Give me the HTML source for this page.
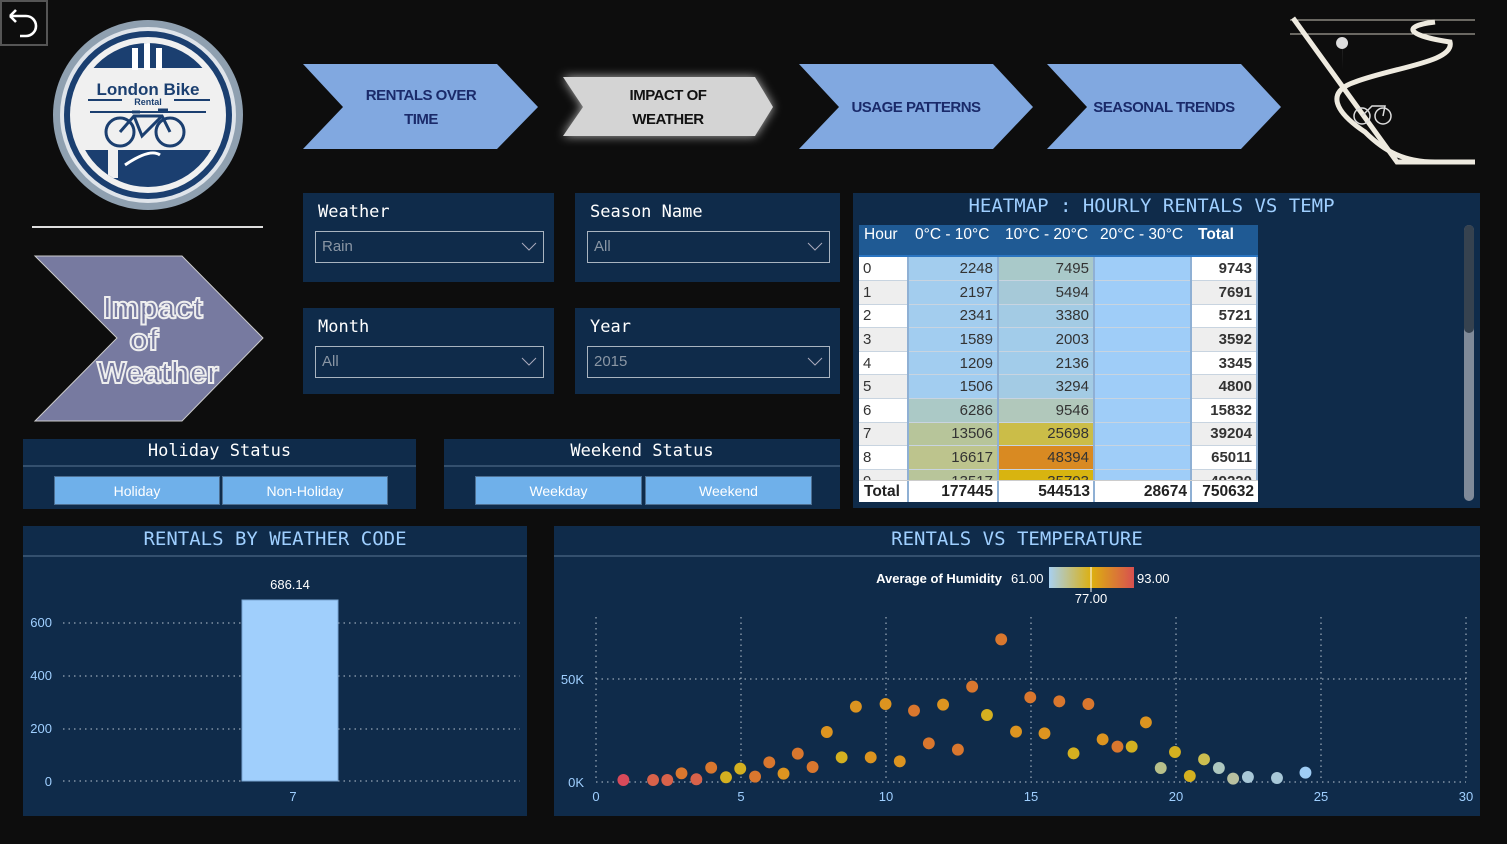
<!DOCTYPE html>
<html><head><meta charset="utf-8"><style>
*{margin:0;padding:0;box-sizing:border-box}
body{width:1507px;height:844px;background:#0d0d0d;position:relative;overflow:hidden;font-family:"Liberation Sans",sans-serif}
.abs{position:absolute}
.panel{position:absolute;background:#0f2b4a}
.mono{font-family:"DejaVu Sans Mono","Liberation Mono",monospace}
.slt{position:absolute;left:15px;top:9px;color:#fff;font-size:17px}
.dd{position:absolute;left:12px;top:38px;width:229px;height:32px;border:1px solid #a9b4c0;color:#8a96a4;font-size:15px;padding:6px 0 0 6px}
.dd svg{position:absolute;right:6px;top:10px}
.btn{position:absolute;top:37px;height:29px;background:#6fb0ea;color:#fff;font-size:14px;text-align:center;line-height:29px;border:1px solid #4d6f92}
table{border-collapse:collapse;font-size:15px;font-family:"Liberation Sans",sans-serif}
td{height:23.6px;padding:0 4px;border-right:2px solid #8fb0d4;border-bottom:1px solid #c8d4e0;color:#333}
</style></head><body>
<div class="abs" style="left:0;top:0;width:48px;height:46px;border:2px solid #555"></div>
<svg class="abs" style="left:4px;top:4px" width="40" height="40" viewBox="0 0 40 40"><path d="M6 12 L12 6 M6 12 L12 18 M6 12 H22 a10 10 0 0 1 0 20 H16" fill="none" stroke="#fff" stroke-width="2.6"/></svg>
<svg class="abs" style="left:50px;top:20px" width="196" height="190" viewBox="0 0 196 190">
<circle cx="98" cy="95" r="95" fill="#8fa0b0"/><circle cx="98" cy="95" r="88" fill="#dfe4ea"/>
<circle cx="98" cy="95" r="84" fill="#1b3f70"/><circle cx="98" cy="95" r="78" fill="#f0f0f0"/>
<clipPath id="c"><circle cx="98" cy="95" r="72"/></clipPath>
<g clip-path="url(#c)"><rect x="0" y="0" width="196" height="48" fill="#1b3f70"/><rect x="0" y="130" width="196" height="60" fill="#1b3f70"/>
<rect x="82" y="28" width="6" height="22" fill="#fff"/><rect x="94" y="22" width="6" height="28" fill="#fff"/><rect x="106" y="28" width="6" height="22" fill="#fff"/>
<rect x="58" y="128" width="10" height="30" fill="#f0f0f0"/><path d="M75 145 Q100 128 110 135" stroke="#fff" stroke-width="3" fill="none"/></g>
<text x="98" y="75" text-anchor="middle" font-family="Liberation Sans" font-weight="bold" font-size="17" fill="#1b3f70">London Bike</text>
<text x="98" y="85" text-anchor="middle" font-family="Liberation Sans" font-weight="bold" font-size="9" fill="#1b3f70">Rental</text>
<path d="M38 80 H72 M124 80 H160 M40 92 H156" stroke="#1b3f70" stroke-width="2"/>
<g fill="none" stroke="#1b3f70" stroke-width="3"><circle cx="70" cy="112" r="14"/><circle cx="120" cy="112" r="14"/><path d="M70 112 L84 96 H112 L120 112 M84 96 L92 116 L112 96 M82 92 H90 M108 90 H118"/></g>
</svg>
<div class="abs" style="left:32px;top:226px;width:231px;height:2px;background:#ddd"></div>
<svg class="abs" style="left:30px;top:252px" width="240" height="175"><polygon points="5,4 152,4 233,86 152,169 5,169 87,86" fill="#777aa0" stroke="#ccc" stroke-width="1"/>
<g font-family="Liberation Sans" font-weight="bold" font-size="31" fill="none" stroke="#eee" stroke-width="2" text-anchor="middle"><text x="123" y="66">Impact</text><text x="114" y="98">of</text><text x="128" y="131">Weather</text></g></svg>
<svg class="abs" style="left:290px;top:50px" width="1000" height="110">
<defs><filter id="g" x="-20%" y="-40%" width="140%" height="180%"><feGaussianBlur stdDeviation="5"/></filter></defs>
<polygon points="13,14 207,14 248,57 207,99 13,99 53,57" fill="#81a8e0"/>
<polygon points="273,27 465,27 483,57 465,86 273,86 293,57" fill="#fff" filter="url(#g)" opacity=".7"/>
<polygon points="273,27 465,27 483,57 465,86 273,86 293,57" fill="#d4d4d4"/>
<polygon points="509,14 703,14 743,57 703,99 509,99 549,57" fill="#81a8e0"/>
<polygon points="757,14 951,14 991,57 951,99 757,99 797,57" fill="#81a8e0"/>
<g font-family="Liberation Sans" font-size="15" text-anchor="middle" font-weight="bold" letter-spacing="-0.5"><text x="131" y="50" fill="#1a2a6a">RENTALS OVER</text><text x="131" y="74" fill="#1a2a6a">TIME</text>
<text x="378" y="50" fill="#111">IMPACT OF</text><text x="378" y="74" fill="#111">WEATHER</text>
<text x="626" y="62" fill="#1a2a6a">USAGE PATTERNS</text><text x="874" y="62" fill="#1a2a6a">SEASONAL TRENDS</text></g></svg>
<svg class="abs" style="left:1285px;top:12px" width="195" height="160">
<path d="M5 8 H190 M5 22 H190" stroke="#c8c4b8" stroke-width="1"/>
<path d="M8 6 L112 150 H190" stroke="#eeeadf" stroke-width="5" fill="none"/>
<path d="M150 10 C110 15 130 25 165 30 C170 50 110 55 70 70 C40 80 50 100 80 120 C100 140 120 150 150 150" stroke="#eeeadf" stroke-width="5" fill="none"/>
<path d="M57 37 a6 6 0 1 1 0.1 0 L57 58z" fill="#ddd"/>
<g stroke="#ddd" stroke-width="1.5" fill="none"><circle cx="77" cy="104" r="8"/><circle cx="98" cy="104" r="8"/><path d="M77 104 L87 94 H100 L98 104"/></g>
</svg>
<div class="panel" style="left:303px;top:193px;width:251px;height:89px"><div class="slt mono">Weather</div><div class="dd">Rain<svg width="16" height="10"><path d="M1 1 L8 8 L15 1" stroke="#aab" fill="none"/></svg></div></div>
<div class="panel" style="left:575px;top:193px;width:265px;height:89px"><div class="slt mono">Season Name</div><div class="dd" style="width:243px">All<svg width="16" height="10"><path d="M1 1 L8 8 L15 1" stroke="#aab" fill="none"/></svg></div></div>
<div class="panel" style="left:303px;top:308px;width:251px;height:86px"><div class="slt mono">Month</div><div class="dd">All<svg width="16" height="10"><path d="M1 1 L8 8 L15 1" stroke="#aab" fill="none"/></svg></div></div>
<div class="panel" style="left:575px;top:308px;width:265px;height:86px"><div class="slt mono">Year</div><div class="dd" style="width:243px">2015<svg width="16" height="10"><path d="M1 1 L8 8 L15 1" stroke="#aab" fill="none"/></svg></div></div>
<div class="panel" style="left:23px;top:439px;width:393px;height:70px"><div class="mono abs" style="left:0;width:100%;top:2px;text-align:center;color:#fff;font-size:17px">Holiday Status</div><div class="abs" style="left:0;top:26px;width:100%;height:2px;background:#34506e"></div>
<div class="btn" style="left:31px;width:166px">Holiday</div><div class="btn" style="left:199px;width:166px">Non-Holiday</div></div>
<div class="panel" style="left:444px;top:439px;width:396px;height:70px"><div class="mono abs" style="left:0;width:100%;top:2px;text-align:center;color:#fff;font-size:17px">Weekend Status</div><div class="abs" style="left:0;top:26px;width:100%;height:2px;background:#34506e"></div>
<div class="btn" style="left:31px;width:167px">Weekday</div><div class="btn" style="left:201px;width:167px">Weekend</div></div>
<div class="panel" style="left:853px;top:193px;width:627px;height:315px">
<div class="mono abs" style="left:0;width:100%;top:2px;text-align:center;color:#9fcfff;font-size:19px;padding-right:30px">HEATMAP : HOURLY RENTALS VS TEMP</div>
<div class="abs" style="left:611px;top:32px;width:10px;height:276px;border-radius:5px;background:#7f8a99"></div>
<div class="abs" style="left:611px;top:32px;width:10px;height:108px;border-radius:5px;background:#36424f"></div>
<div class="abs" style="left:6px;top:32px;width:399px;height:277px;overflow:hidden;background:#fff">
<div style="height:32px;background:#1f5a94;color:#fff;font-size:15.5px;position:relative;border-bottom:2px solid #2a74c0">
<span class="abs" style="left:5px;top:1px">Hour</span><span class="abs" style="left:56px;top:1px">0°C - 10°C</span><span class="abs" style="left:146px;top:1px">10°C - 20°C</span><span class="abs" style="left:241px;top:1px">20°C - 30°C</span><b class="abs" style="left:339px;top:1px">Total</b></div>
<table style="width:399px">
<colgroup><col style="width:49px"><col style="width:90px"><col style="width:96px"><col style="width:97px"><col></colgroup>
<tr><td>0</td><td align=right style="background:#a3cdee">2248</td><td align=right style="background:#a9c9c9">7495</td><td style="background:#9fcdf8"></td><td align=right><b>9743</b></td></tr>
<tr style="background:#eee"><td>1</td><td align=right style="background:#a3cdee">2197</td><td align=right style="background:#a6c9d8">5494</td><td style="background:#9fcdf8"></td><td align=right><b>7691</b></td></tr>
<tr><td>2</td><td align=right style="background:#a3cdee">2341</td><td align=right style="background:#a3cbe4">3380</td><td style="background:#9fcdf8"></td><td align=right><b>5721</b></td></tr>
<tr style="background:#eee"><td>3</td><td align=right style="background:#a2cdf0">1589</td><td align=right style="background:#a2ccea">2003</td><td style="background:#9fcdf8"></td><td align=right><b>3592</b></td></tr>
<tr><td>4</td><td align=right style="background:#a2cdf0">1209</td><td align=right style="background:#a2ccea">2136</td><td style="background:#9fcdf8"></td><td align=right><b>3345</b></td></tr>
<tr style="background:#eee"><td>5</td><td align=right style="background:#a2cdf0">1506</td><td align=right style="background:#a3cbe4">3294</td><td style="background:#9fcdf8"></td><td align=right><b>4800</b></td></tr>
<tr><td>6</td><td align=right style="background:#abc9c6">6286</td><td align=right style="background:#b1c8bb">9546</td><td style="background:#9fcdf8"></td><td align=right><b>15832</b></td></tr>
<tr style="background:#eee"><td>7</td><td align=right style="background:#b7c59a">13506</td><td align=right style="background:#cbbd48">25698</td><td style="background:#9fcdf8"></td><td align=right><b>39204</b></td></tr>
<tr><td>8</td><td align=right style="background:#bdc48d">16617</td><td align=right style="background:#d98a22">48394</td><td style="background:#9fcdf8"></td><td align=right><b>65011</b></td></tr>
<tr style="background:#eee"><td>9</td><td align=right style="background:#b8c59a">13517</td><td align=right style="background:#d8b410">35703</td><td style="background:#9fcdf8"></td><td align=right><b>49220</b></td></tr>
</table>
<div class="abs" style="left:0;top:255px;width:399px;height:22px;background:#fff;font-weight:bold;font-size:15.5px;color:#222;border-top:1px solid #ccc">
<span class="abs" style="left:5px;top:2px">Total</span><span class="abs" style="right:265px;top:2px">177445</span><span class="abs" style="right:168px;top:2px">544513</span><span class="abs" style="right:71px;top:2px">28674</span><span class="abs" style="right:4px;top:2px">750632</span>
<div class="abs" style="left:48px;top:0;width:2px;height:22px;background:#8fb0d4"></div><div class="abs" style="left:138px;top:0;width:2px;height:22px;background:#8fb0d4"></div><div class="abs" style="left:234px;top:0;width:2px;height:22px;background:#8fb0d4"></div><div class="abs" style="left:331px;top:0;width:2px;height:22px;background:#8fb0d4"></div></div>
</div></div>
<div class="panel" style="left:23px;top:526px;width:504px;height:290px">
<div class="mono abs" style="left:0;width:100%;top:2px;text-align:center;color:#9fcfff;font-size:19px">RENTALS BY WEATHER CODE</div>
<div class="abs" style="left:0;top:29px;width:100%;height:2px;background:#34506e"></div></div>
<svg class="abs" style="left:23px;top:526px" width="504" height="290" font-family="Liberation Sans" font-size="13">
<g stroke="#b8c4d0" stroke-dasharray="1.5 4"><path d="M40 97 H497 M40 150 H497 M40 203 H497 M40 255 H497"/></g>
<rect x="219" y="74" width="96" height="181" fill="#a0cffc" stroke="#7aa6d2"/>
<g fill="#9fcfff" text-anchor="end"><text x="29" y="101">600</text><text x="29" y="154">400</text><text x="29" y="207">200</text><text x="29" y="260">0</text></g>
<text x="267" y="63" fill="#fff" text-anchor="middle">686.14</text><text x="270" y="275" fill="#9fcfff" text-anchor="middle">7</text></svg>
<div class="panel" style="left:554px;top:526px;width:926px;height:290px">
<div class="mono abs" style="left:0;width:100%;top:2px;text-align:center;color:#9fcfff;font-size:19px">RENTALS VS TEMPERATURE</div>
<div class="abs" style="left:0;top:29px;width:100%;height:2px;background:#34506e"></div></div>
<svg class="abs" style="left:554px;top:560px" width="930" height="250" font-family="Liberation Sans" font-size="13">
<defs><linearGradient id="hg"><stop offset="0" stop-color="#a8d0f0"/><stop offset=".5" stop-color="#dcb010"/><stop offset="1" stop-color="#d85050"/></linearGradient></defs>
<text x="448" y="23" fill="#fff" font-weight="bold" text-anchor="end">Average of Humidity</text><text x="457" y="23" fill="#fff">61.00</text>
<rect x="495" y="7" width="85" height="21" fill="url(#hg)"/><path d="M537 7 V32" stroke="#fff"/><text x="583" y="23" fill="#fff">93.00</text><text x="537" y="43" fill="#fff" text-anchor="middle">77.00</text>
<g stroke="#b8c4d0" stroke-dasharray="1.5 4"><path d="M42 57 V222 M187 57 V222 M332 57 V222 M477 57 V222 M622 57 V222 M767 57 V222 M912 57 V222 M42 119 H912 M42 222 H912"/></g>
<g fill="#9fcfff" text-anchor="middle"><text x="42" y="241">0</text><text x="187" y="241">5</text><text x="332" y="241">10</text><text x="477" y="241">15</text><text x="622" y="241">20</text><text x="767" y="241">25</text><text x="912" y="241">30</text></g>
<g fill="#9fcfff" text-anchor="end"><text x="30" y="124">50K</text><text x="30" y="227">0K</text></g>
<g transform="scale(0.5931,0.3333)">
<g fill="#d9772e"><ellipse cx="167" cy="660" rx="10" ry="18" fill="#d8624a"/><ellipse cx="191" cy="660" rx="10" ry="18" fill="#d8624a"/><ellipse cx="215" cy="640" rx="10" ry="18"/><ellipse cx="240" cy="658" rx="10" ry="18" fill="#d8624a"/><ellipse cx="265" cy="623" rx="10" ry="18"/><ellipse cx="339" cy="650" rx="10" ry="18"/><ellipse cx="363" cy="607" rx="10" ry="18"/><ellipse cx="411" cy="581" rx="10" ry="18"/><ellipse cx="436" cy="621" rx="10" ry="18"/><ellipse cx="632" cy="550" rx="10" ry="18"/><ellipse cx="681" cy="569" rx="10" ry="18"/><ellipse cx="705" cy="380" rx="10" ry="18"/><ellipse cx="754" cy="238" rx="10" ry="18"/><ellipse cx="803" cy="412" rx="10" ry="18"/><ellipse cx="852" cy="424" rx="10" ry="18"/><ellipse cx="950" cy="560" rx="10" ry="18"/><ellipse cx="901" cy="432" rx="10" ry="18"/><ellipse cx="607" cy="452" rx="10" ry="18"/></g>
<ellipse cx="117" cy="660" rx="10" ry="18" fill="#d84a5a"/>
<g fill="#dc9420"><ellipse cx="387" cy="641" rx="10" ry="18"/><ellipse cx="460" cy="516" rx="10" ry="18"/><ellipse cx="509" cy="440" rx="10" ry="18"/><ellipse cx="534" cy="592" rx="10" ry="18"/><ellipse cx="559" cy="432" rx="10" ry="18"/><ellipse cx="583" cy="604" rx="10" ry="18"/><ellipse cx="656" cy="434" rx="10" ry="18"/><ellipse cx="779" cy="515" rx="10" ry="18"/><ellipse cx="827" cy="520" rx="10" ry="18"/><ellipse cx="925" cy="538" rx="10" ry="18"/><ellipse cx="998" cy="487" rx="10" ry="18"/></g>
<g fill="#d4b020"><ellipse cx="290" cy="652" rx="10" ry="18"/><ellipse cx="314" cy="626" rx="10" ry="18"/><ellipse cx="485" cy="592" rx="10" ry="18"/><ellipse cx="730" cy="465" rx="10" ry="18"/><ellipse cx="876" cy="580" rx="10" ry="18"/><ellipse cx="974" cy="560" rx="10" ry="18"/><ellipse cx="1047" cy="576" rx="10" ry="18"/><ellipse cx="1072" cy="648" rx="10" ry="18"/><ellipse cx="1096" cy="598" rx="10" ry="18" fill="#ccbe50"/></g>
<ellipse cx="1023" cy="624" rx="10" ry="18" fill="#b8c08a"/><ellipse cx="1121" cy="624" rx="10" ry="18" fill="#aec8c0"/><ellipse cx="1145" cy="656" rx="10" ry="18" fill="#b8c0a0"/><ellipse cx="1170" cy="651" rx="10" ry="18" fill="#a8c8d8"/><ellipse cx="1219" cy="654" rx="10" ry="18" fill="#a8c8d8"/><ellipse cx="1267" cy="638" rx="10" ry="18" fill="#9fcdf5"/>
</g></svg>
</body></html>
